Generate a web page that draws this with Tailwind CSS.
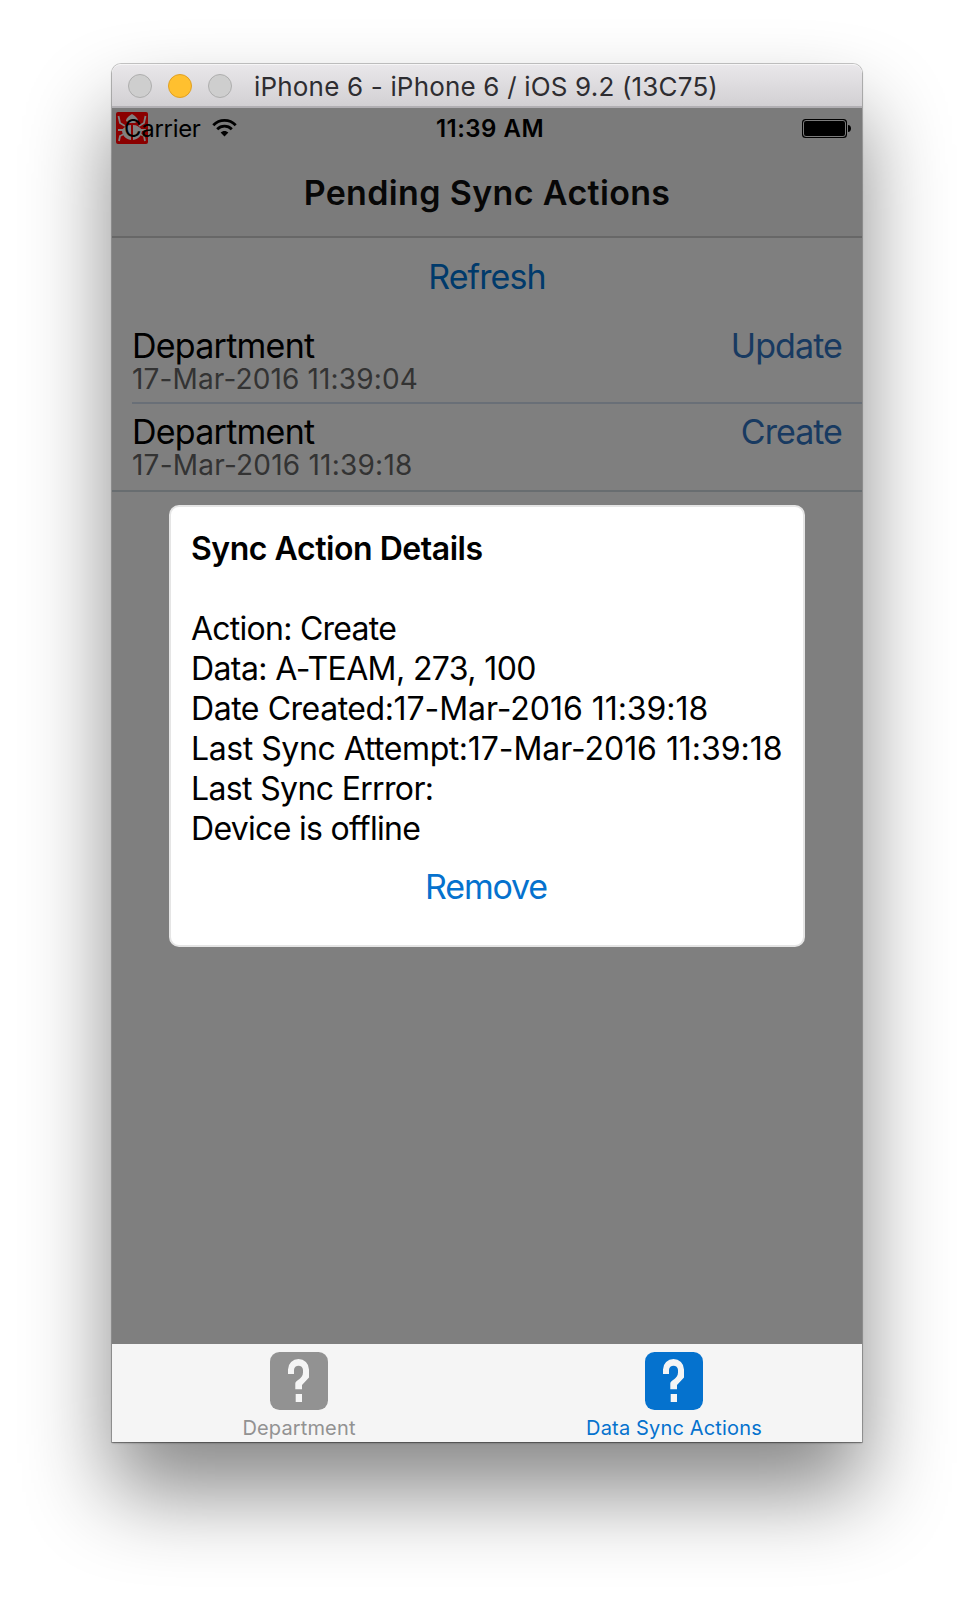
<!DOCTYPE html>
<html lang="en">
<head>
<meta charset="utf-8">
<title>Pending Sync Actions</title>
<script src="https://cdn.jsdelivr.net/npm/@tailwindcss/browser@4"></script>
</head>
<body class="bg-white overflow-hidden font-['Inter','Liberation_Sans',sans-serif]">
<div class="h-[1602px] w-[974px] pt-16 pl-28">
  <div class="relative flex h-[1378px] w-[750px] flex-col rounded-t-[9px] shadow-[0_0_0_1px_rgba(0,0,0,0.2),0_1px_2px_rgba(0,0,0,0.4),0_50px_86px_rgba(0,0,0,0.47)]">

    <!-- Window title bar -->
    <header class="flex h-11 shrink-0 items-center rounded-t-[9px] border-t border-b-2 border-t-[#f6f5f6] border-b-[#b1afb3] bg-linear-to-b from-[#e9e7ea] to-[#d2d0d3] pl-4">
      <div class="flex gap-4">
        <span class="size-6 rounded-full border border-[#aeaeae] bg-[#cecece]"></span>
        <span class="size-6 rounded-full border border-[#e0a023] bg-[#ffc02f]"></span>
        <span class="size-6 rounded-full border border-[#aeaeae] bg-[#cecece]"></span>
      </div>
      <h1 class="ml-[22px] pt-[3px] text-[26px] leading-8 tracking-[0.18px] whitespace-nowrap text-[#2e2d31]">iPhone 6 - iPhone 6 / iOS 9.2 (13C75)</h1>
    </header>

    <!-- Status bar and navigation bar -->
    <div class="h-[130px] shrink-0 border-b-2 border-[#676767] bg-[#7b7b7b]">
      <div class="flex h-10 items-center">
        <div class="flex flex-1 items-center pl-1">
          <svg class="size-8 shrink-0" viewBox="0 0 32 32" fill="none">
            <rect width="32" height="32" rx="2" fill="#8b0000"/>
            <path d="M16 2c3 2 6 4 6 7l-3 2h-6l-3-2c0-3 3-5 6-7z" fill="#808080"/>
            <path d="M15 13v15C9 27 6 23 6 18c2-3 5-5 9-5zM17 13v15c6-1 9-5 9-10-2-3-5-5-9-5z" fill="#808080"/>
            <path d="M9 14L4 11 2.500 4M23 14l5-3 1.500-7M7 18H2M25 18h5M8 22l-4 2-1 5M24 22l4 2 1 5" stroke="#808080" stroke-width="1.800"/>
          </svg>
          <span class="-ml-6 pt-0.5 text-2xl leading-8 tracking-[-0.3px] text-black">Carrier</span>
          <svg class="ml-[11px] h-[18px] w-[25px]" viewBox="0 0 25 18" fill="none">
            <path d="M1.300 6.200C7.500-.2 17.500-.2 23.700 6.200M5.200 10.200c4-4.100 10.600-4.100 14.600 0" stroke="#000" stroke-width="2.800"/>
            <path d="M12.500 17.500L8.600 13.600c2.200-2.100 5.600-2.100 7.800 0z" fill="#000"/>
          </svg>
        </div>
        <span class="pt-0.5 pl-[13px] text-2xl leading-8 font-semibold tracking-[0.5px] text-black">11:39 AM</span>
        <div class="flex flex-1 items-center justify-end pr-[11px]">
          <svg class="mt-px h-[19px] w-[49px]" viewBox="0 0 49 19">
            <rect width="45" height="19" rx="3.500" fill="#000"/>
            <rect x="1.500" y="1.500" width="42" height="16" rx="2.500" fill="none" stroke="#7b7b7b"/>
            <path d="M46 6c4 0 4 7 0 7z" fill="#000"/>
          </svg>
        </div>
      </div>
      <h2 class="pt-[23px] text-center text-[34px] leading-[44px] font-semibold tracking-[0.35px] text-[#070707]">Pending Sync Actions</h2>
    </div>

    <!-- Pending actions -->
    <main class="flex-1 bg-[#7f7f7f]">
      <div class="pt-[19px] text-center text-[34px] leading-10 tracking-[-0.9px] text-[#003a6b]">Refresh</div>
      <ul class="mt-3 border-b-2 border-[#686d70]">
        <li class="ml-5 flex h-[95px] justify-between border-b-2 border-[#696f77] pt-[19px] pr-5">
          <div>
            <div class="text-[34px] leading-[35px] tracking-[-0.75px] text-black">Department</div>
            <div class="text-[28px] leading-8 tracking-[0.14px] text-[#333333]">17-Mar-2016 11:39:04</div>
          </div>
          <div class="text-[34px] leading-9 tracking-[-0.9px] text-[#183a61]">Update</div>
        </li>
        <li class="ml-5 flex h-[86px] justify-between pt-[10px] pr-5">
          <div>
            <div class="text-[34px] leading-[35px] tracking-[-0.75px] text-black">Department</div>
            <div class="text-[28px] leading-8 tracking-[0.22px] text-[#333333]">17-Mar-2016 11:39:18</div>
          </div>
          <div class="text-[34px] leading-9 tracking-[-0.95px] text-[#183a61]">Create</div>
        </li>
      </ul>
    </main>

    <!-- Tab bar -->
    <nav class="grid h-[98px] shrink-0 grid-cols-2 bg-[#f5f5f5]">
      <div class="flex flex-col items-center pt-2 pr-px text-[#929292]">
        <svg class="size-[58px]" viewBox="0 0 58 58">
          <rect width="58" height="58" rx="9.500" fill="currentColor"/>
          <path d="M18 22V17.500a10.500 10.500 0 0 1 21 0V25.500L32 33V37.300H25.300V31.500C25.300 28 33 27 33 20.500V18c0-5.700-9-5.700-9 0v4zM25.700 42H32v8h-6.300z" fill="#f5f5f5"/>
        </svg>
        <span class="mt-1 text-xl leading-7 tracking-[0.15px]">Department</span>
      </div>
      <div class="flex flex-col items-center pt-2 pr-px text-[#0572ce]">
        <svg class="size-[58px]" viewBox="0 0 58 58">
          <rect width="58" height="58" rx="9.500" fill="currentColor"/>
          <path d="M18 22V17.500a10.500 10.500 0 0 1 21 0V25.500L32 33V37.300H25.300V31.500C25.300 28 33 27 33 20.500V18c0-5.700-9-5.700-9 0v4zM25.700 42H32v8h-6.300z" fill="#f5f5f5"/>
        </svg>
        <span class="mt-1 text-xl leading-7 tracking-[0.16px]">Data Sync Actions</span>
      </div>
    </nav>

    <!-- Details popup -->
    <section class="absolute top-[441px] left-[57px] h-[442px] w-[636px] rounded-[10px] border-2 border-[#e5e5e5] bg-white pt-[22px] pl-5 text-[32px] leading-10 whitespace-nowrap text-black">
      <h3 class="font-semibold tracking-[-0.46px]">Sync Action Details</h3>
      <div class="mt-10 tracking-[-0.75px]">Action: Create</div>
      <div class="tracking-[-0.6px]">Data: A-TEAM, 273, 100</div>
      <div><span class="tracking-[-0.45px]">Date Created:</span><span class="tracking-[-0.04px]">17-Mar-2016 11:39:18</span></div>
      <div><span class="tracking-[-0.43px]">Last Sync Attempt:</span><span class="tracking-[-0.04px]">17-Mar-2016 11:39:18</span></div>
      <div class="tracking-[-0.65px]">Last Sync Errror:</div>
      <div class="tracking-[-0.7px]">Device is offline</div>
      <div class="mt-[18px] mr-[22px] text-center text-[34px] tracking-[-1.2px] text-[#0572ce]">Remove</div>
    </section>
  </div>
</div>
</body>
</html>
